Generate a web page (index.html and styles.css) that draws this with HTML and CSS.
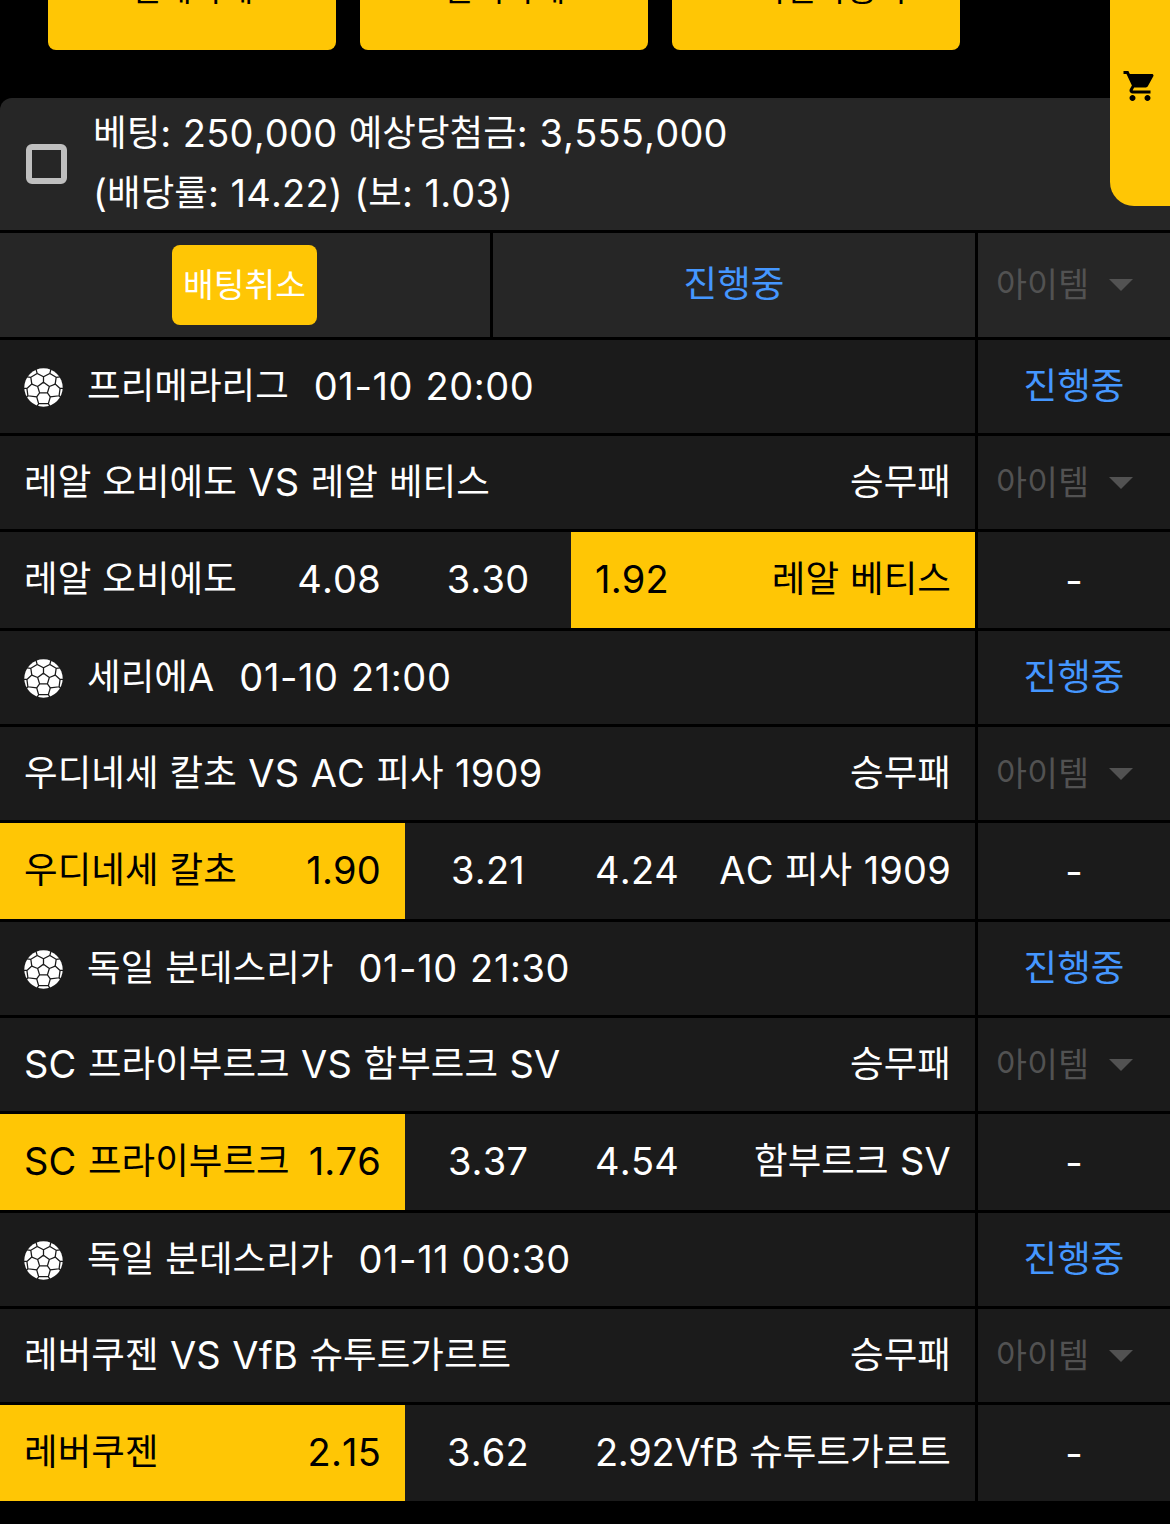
FILE: index.html
```html
<!DOCTYPE html>
<html lang="ko">
<head>
<meta charset="utf-8">
<title>베팅내역</title>
<link rel="stylesheet" href="styles.css">
</head>
<body>
<svg class="defs" aria-hidden="true">
  <symbol id="ball" viewBox="0 0 40 40">
    <clipPath id="disc"><circle cx="20" cy="20" r="19.7"/></clipPath>
    <circle cx="20" cy="20" r="19.7" fill="#fff"/>
    <g clip-path="url(#disc)" fill="none" stroke="#1b1b1b" stroke-width="1.300">
      <path d="M20 14.500l6 4.500-2 6.500h-8L14 19zM20 14.500V9M26 19l6-2.500M24 25.500l3 4M16 25.500l-3 4M14 19l-6-2.500"/>
      <path d="M20 9l-6.500-3.500-6.500 4 1 7-5 4.500M20 9l6.500-3.500 6.500 4-1 7 5 4.500M13.500 5.500L12 0M26.500 5.500L28 0M7 9.500L3 9M33 9.500L37 9M3 21l1 7.500 9 1 2 7h10l2-7 9-1 1-7.500M3 21H0M37 21h3M4 28.500l-2 2M36 28.500l2 2M15 36.500L13 40M25 36.500L27 40"/>
    </g>
  </symbol>
</svg>

<div class="toolbar">
  <button class="tool">전체삭제</button>
  <button class="tool">선택삭제</button>
  <button class="tool">보기전사용자</button>
</div>

<aside class="cart">
  <svg class="cart-icon" viewBox="0 0 24 24"><path d="M7 18c-1.100 0-1.990.9-1.990 2S5.900 22 7 22s2-.9 2-2-.9-2-2-2zM1 2v2h2l3.600 7.590-1.350 2.450c-.16.280-.25.610-.25.960 0 1.100.9 2 2 2h12v-2H7.420c-.14 0-.25-.11-.25-.25l.03-.12.900-1.630h7.450c.75 0 1.410-.41 1.750-1.030l3.580-6.490c.08-.14.120-.31.120-.48 0-.55-.45-1-1-1H5.210l-.94-2H1zm16 16c-1.100 0-1.990.9-1.990 2s.89 2 1.990 2 2-.9 2-2-.9-2-2-2z"/></svg>
</aside>

<main class="slip">
  <header class="summary">
    <span class="checkbox"></span>
    <p class="summary-text"><span class="ko">베팅</span>: 250,000 <span class="ko">예상당첨금</span>: 3,555,000<br>(<span class="ko">배당률</span>: 14.22) (<span class="ko">보</span>: 1.03)</p>
  </header>

  <div class="row actions">
    <div class="cell center"><button class="cancel">배팅취소</button></div>
    <div class="cell center status"><span><span class="ko">진행중</span></span></div>
    <div class="cell item"><span>아이템</span><i class="arrow"></i></div>
  </div>

  <section class="match">
    <div class="row">
      <div class="cell league"><svg class="ball"><use href="#ball"/></svg><span><span class="ko">프리메라리그</span></span><span class="time">01-10 20:00</span></div>
      <div class="cell center status"><span><span class="ko">진행중</span></span></div>
    </div>
    <div class="row">
      <div class="cell game"><span><span class="ko">레알 오비에도</span> VS <span class="ko">레알 베티스</span></span><span><span class="ko">승무패</span></span></div>
      <div class="cell item"><span>아이템</span><i class="arrow"></i></div>
    </div>
    <div class="row odds">
      <div class="cell pick"><span><span class="ko">레알 오비에도</span></span><span>4.08</span></div>
      <div class="cell center">3.30</div>
      <div class="cell pick on"><span>1.92</span><span><span class="ko">레알 베티스</span></span></div>
      <div class="cell center result">-</div>
    </div>
  </section>

  <section class="match">
    <div class="row">
      <div class="cell league"><svg class="ball"><use href="#ball"/></svg><span><span class="ko">세리에</span>A</span><span class="time">01-10 21:00</span></div>
      <div class="cell center status"><span><span class="ko">진행중</span></span></div>
    </div>
    <div class="row">
      <div class="cell game"><span><span class="ko">우디네세 칼초</span> VS AC <span class="ko">피사</span> 1909</span><span><span class="ko">승무패</span></span></div>
      <div class="cell item"><span>아이템</span><i class="arrow"></i></div>
    </div>
    <div class="row odds">
      <div class="cell pick on"><span><span class="ko">우디네세 칼초</span></span><span>1.90</span></div>
      <div class="cell center">3.21</div>
      <div class="cell pick"><span>4.24</span><span>AC <span class="ko">피사</span> 1909</span></div>
      <div class="cell center result">-</div>
    </div>
  </section>

  <section class="match">
    <div class="row">
      <div class="cell league"><svg class="ball"><use href="#ball"/></svg><span><span class="ko">독일 분데스리가</span></span><span class="time">01-10 21:30</span></div>
      <div class="cell center status"><span><span class="ko">진행중</span></span></div>
    </div>
    <div class="row">
      <div class="cell game"><span>SC <span class="ko">프라이부르크</span> VS <span class="ko">함부르크</span> SV</span><span><span class="ko">승무패</span></span></div>
      <div class="cell item"><span>아이템</span><i class="arrow"></i></div>
    </div>
    <div class="row odds">
      <div class="cell pick on"><span>SC <span class="ko">프라이부르크</span></span><span>1.76</span></div>
      <div class="cell center">3.37</div>
      <div class="cell pick"><span>4.54</span><span><span class="ko">함부르크</span> SV</span></div>
      <div class="cell center result">-</div>
    </div>
  </section>

  <section class="match">
    <div class="row">
      <div class="cell league"><svg class="ball"><use href="#ball"/></svg><span><span class="ko">독일 분데스리가</span></span><span class="time">01-11 00:30</span></div>
      <div class="cell center status"><span><span class="ko">진행중</span></span></div>
    </div>
    <div class="row">
      <div class="cell game"><span><span class="ko">레버쿠젠</span> VS VfB <span class="ko">슈투트가르트</span></span><span><span class="ko">승무패</span></span></div>
      <div class="cell item"><span>아이템</span><i class="arrow"></i></div>
    </div>
    <div class="row odds">
      <div class="cell pick on"><span><span class="ko">레버쿠젠</span></span><span>2.15</span></div>
      <div class="cell center">3.62</div>
      <div class="cell pick tight"><span>2.92</span><span>VfB <span class="ko">슈투트가르트</span></span></div>
      <div class="cell center result">-</div>
    </div>
  </section>
</main>
</body>
</html>
```

FILE: styles.css
```css
* { box-sizing: border-box; }

body {
  margin: 0;
  height: 1524px;
  overflow: hidden;
  background: #000;
  color: #fff;
  font: 400 38px/60px Inter, "Noto Sans CJK KR", sans-serif;
  font-kerning: none;
  letter-spacing: 0.2px;
  word-spacing: 0.5px;
}

p { margin: 0; }

button {
  border: 0;
  padding: 0;
  border-radius: 8px;
  background: #ffc605;
  font: 400 33.4px/48px "Noto Sans CJK KR", sans-serif;
}

.defs { display: none; }

/* Hangul is set slightly smaller than the Latin text and raised to match it */
.ko {
  font-family: "Noto Sans CJK KR", sans-serif;
  font-size: 36.5px;
  font-weight: 400;
  line-height: 1;
  letter-spacing: 0.05px;
  word-spacing: 0.8px;
  vertical-align: 1.5px;
}

.toolbar {
  display: flex;
  gap: 24px;
  height: 98px;
  padding-left: 48px;
}

.tool {
  width: 288px;
  height: 120px;
  margin-top: -70px;
  padding-bottom: 6px;
  color: #000;
}

.cart {
  position: absolute;
  top: 0;
  right: 0;
  width: 60px;
  height: 206px;
  padding: 68px 12px 0;
  border-bottom-left-radius: 24px;
  background: #ffc605;
}

.cart-icon { display: block; width: 36px; height: 36px; }

.slip {
  display: flex;
  flex-direction: column;
  gap: 3px;
}

.summary {
  display: flex;
  align-items: center;
  gap: 26px;
  height: 132px;
  padding-left: 26px;
  border-radius: 12px 12px 0 0;
  background: #262626;
}

.checkbox {
  width: 41px;
  height: 40px;
  border: 6px solid #bfbfbf;
  border-radius: 6px;
}

.summary-text { height: 124px; padding-top: 1px; white-space: nowrap; }

.match { display: grid; gap: 3px; }

.row {
  display: grid;
  grid-template-columns: 975px 192px;
  column-gap: 3px;
  height: 93px;
}

.cell {
  display: flex;
  align-items: center;
  padding-bottom: 2px;
  background: #1b1b1b;
  white-space: nowrap;
}

.actions { grid-template-columns: 490px 482px 192px; height: 104px; }
.actions .cell { padding-bottom: 0; background: #262626; }
.actions .status { padding-bottom: 2px; }

.center { justify-content: center; }
.status { color: #4597ff; }

.cancel { width: 145px; height: 80px; padding-bottom: 4px; margin-right: 1px; color: #fff; }

.cell.item {
  gap: 20px;
  padding: 0 0 0 18px;
  color: #525252;
  font-family: "Noto Sans CJK KR", sans-serif;
  font-size: 33.6px;
}
.item span { padding-bottom: 4px; }

.arrow {
  border: 12.5px solid transparent;
  border-top-color: currentColor;
  border-bottom: 0;
}

.league { padding-left: 24px; }
.ball { width: 39px; height: 39px; margin: 4px 24px 0 0; }
.time { margin-left: 25px; letter-spacing: 0.6px; word-spacing: 1px; }

.game, .pick { justify-content: space-between; padding-left: 24px; padding-right: 24px; }
.tight { letter-spacing: -0.4px; }

.odds { grid-template-columns: 405px 166px 404px 192px; column-gap: 0; height: 96px; }
.odds .result { margin-left: 3px; width: 192px; padding-bottom: 0; }
.on { background: #ffc605; color: #000; }
```
